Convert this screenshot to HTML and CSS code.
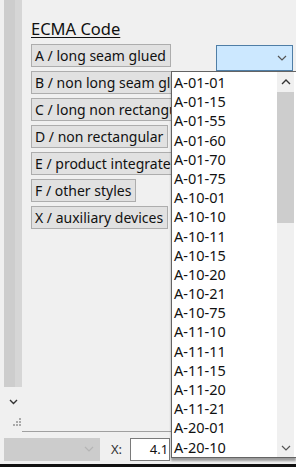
FILE: index.html
```html
<!DOCTYPE html>
<html lang="en">
<head>
    <meta charset="UTF-8">
    <meta name="viewport" content="width=device-width, initial-scale=1.0">
    <title>ECMA Code</title>
    <link rel="stylesheet" href="styles.css">
</head>
<body>
    <div class="window">
        <div class="top">
            <div class="vscroll">
                <div class="vscroll-thumb"></div>
                <div class="vscroll-arrow">
                    <svg width="9" height="6" viewBox="0 0 9 6"><path d="M1 1 L4.5 4.5 L8 1" fill="none" stroke="#333" stroke-width="1.4"/></svg>
                </div>
                <div class="grip">
                    <svg width="10" height="10" viewBox="0 0 10 10" fill="#aaa">
                        <rect x="7" y="1" width="2" height="2"/>
                        <rect x="4" y="4" width="2" height="2"/>
                        <rect x="7" y="4" width="2" height="2"/>
                        <rect x="1" y="7" width="2" height="2"/>
                        <rect x="4" y="7" width="2" height="2"/>
                        <rect x="7" y="7" width="2" height="2"/>
                    </svg>
                </div>
            </div>
            <div class="panel">
                <h1 class="title">ECMA Code</h1>
                <div class="content">
                    <div class="groups">
                        <button class="group">A / long seam glued</button>
                        <button class="group">B / non long seam glued</button>
                        <button class="group">C / long non rectangular</button>
                        <button class="group">D / non rectangular</button>
                        <button class="group">E / product integrated</button>
                        <button class="group">F / other styles</button>
                        <button class="group">X / auxiliary devices</button>
                    </div>
                    <div class="combo">
                        <svg width="10" height="6" viewBox="0 0 10 6"><path d="M1 1 L5 5 L9 1" fill="none" stroke="#555" stroke-width="1.2"/></svg>
                    </div>
                </div>
            </div>
        </div>
        <div class="bottom">
            <div class="combo-disabled">
                <svg width="10" height="6" viewBox="0 0 10 6"><path d="M1 1 L5 5 L9 1" fill="none" stroke="#b5b5b5" stroke-width="1.2"/></svg>
            </div>
            <span class="field-label">X:</span>
            <div class="field">4.1</div>
        </div>

        <div class="dropdown">
            <ul class="items">
                <li>A-01-01</li>
                <li>A-01-15</li>
                <li>A-01-55</li>
                <li>A-01-60</li>
                <li>A-01-70</li>
                <li>A-01-75</li>
                <li>A-10-01</li>
                <li>A-10-10</li>
                <li>A-10-11</li>
                <li>A-10-15</li>
                <li>A-10-20</li>
                <li>A-10-21</li>
                <li>A-10-75</li>
                <li>A-11-10</li>
                <li>A-11-11</li>
                <li>A-11-15</li>
                <li>A-11-20</li>
                <li>A-11-21</li>
                <li>A-20-01</li>
                <li>A-20-10</li>
            </ul>
            <div class="list-scroll">
                <div class="list-arrow">
                    <svg width="10" height="6" viewBox="0 0 10 6"><path d="M1 5 L5 1 L9 5" fill="none" stroke="#333" stroke-width="1.4"/></svg>
                </div>
                <div class="list-thumb"></div>
                <div class="list-track"></div>
                <div class="list-arrow">
                    <svg width="10" height="6" viewBox="0 0 10 6"><path d="M1 1 L5 5 L9 1" fill="none" stroke="#555" stroke-width="1.2"/></svg>
                </div>
            </div>
        </div>
    </div>
</body>
</html>
```

FILE: styles.css
```css
* {
    margin: 0;
    padding: 0;
    box-sizing: border-box;
    font-family: "Noto Sans", "Open Sans", sans-serif;
}

body {
    background: #f0f0f0;
    color: #111;
}

.window {
    position: relative;
    width: 296px;
    height: 467px;
    display: flex;
    flex-direction: column;
    border-bottom: 3px solid #111;
}

.top {
    display: flex;
    height: 432px;
}

.vscroll {
    width: 18px;
    margin-left: 4px;
    display: flex;
    flex-direction: column;
    background: #f0f0f0;
}

.vscroll-thumb {
    flex: 1;
    background: linear-gradient(to right, #cdcdcd 0, #cdcdcd 11px, #d6d6d6 11px);
}

.vscroll-arrow {
    height: 30px;
    display: flex;
    align-items: center;
    justify-content: center;
}

.grip {
    height: 15px;
    display: flex;
    align-items: flex-start;
    justify-content: flex-end;
}

.panel {
    flex: 1;
    padding: 18px 3px 0 9px;
    border-bottom: 1px solid #a0a0a0;
}

.title {
    font-size: 16.5px;
    font-weight: 400;
    text-decoration: underline;
    text-decoration-thickness: 1px;
    text-underline-offset: 2px;
    line-height: 22px;
    margin-bottom: 4px;
}

.content {
    display: flex;
    align-items: flex-start;
}

.groups {
    display: flex;
    flex-direction: column;
    align-items: flex-start;
    gap: 4px;
}

.group {
    height: 23px;
    padding: 0 4px 0 3px;
    border: 1px solid #adadad;
    background: #e1e1e1;
    font-size: 14px;
    color: #111;
    line-height: 21px;
    white-space: nowrap;
}

.combo {
    margin-left: auto;
    width: 77px;
    height: 26px;
    margin-top: 1px;
    background: #cce8ff;
    border: 1px solid #4f7ea6;
    display: flex;
    align-items: center;
    justify-content: flex-end;
    padding-right: 5px;
}

.bottom {
    flex: 1;
    display: flex;
    align-items: center;
    padding-left: 4px;
    padding-top: 2px;
}

.combo-disabled {
    width: 96px;
    height: 23px;
    background: #cccccc;
    display: flex;
    align-items: center;
    justify-content: flex-end;
    padding-right: 6px;
}

.field-label {
    margin-left: 11px;
    font-size: 13px;
    color: #333;
}

.field {
    margin-left: 8px;
    width: 40px;
    height: 23px;
    background: #fff;
    border: 1px solid #7a7a7a;
    font-size: 13px;
    line-height: 21px;
    text-align: right;
    padding-right: 1px;
}

.dropdown {
    position: absolute;
    left: 171px;
    top: 71px;
    width: 125px;
    height: 387px;
    background: #fff;
    border: 1px solid #646464;
    border-right: none;
    display: flex;
    box-shadow: 0 3px 2px rgba(0, 0, 0, 0.35);
}

.items {
    flex: 1;
    list-style: none;
    padding-top: 1px;
}

.items li {
    height: 19.2px;
    line-height: 19.2px;
    font-size: 14.5px;
    padding-left: 2px;
    color: #111;
}

.list-scroll {
    width: 17px;
    margin-right: 2px;
    display: flex;
    flex-direction: column;
    background: #f0f0f0;
}

.list-arrow {
    height: 19px;
    display: flex;
    align-items: center;
    justify-content: center;
    background: #f0f0f0;
}

.list-thumb {
    height: 131px;
    margin-top: 1px;
    background: #cdcdcd;
}

.list-track {
    flex: 1;
}
```
